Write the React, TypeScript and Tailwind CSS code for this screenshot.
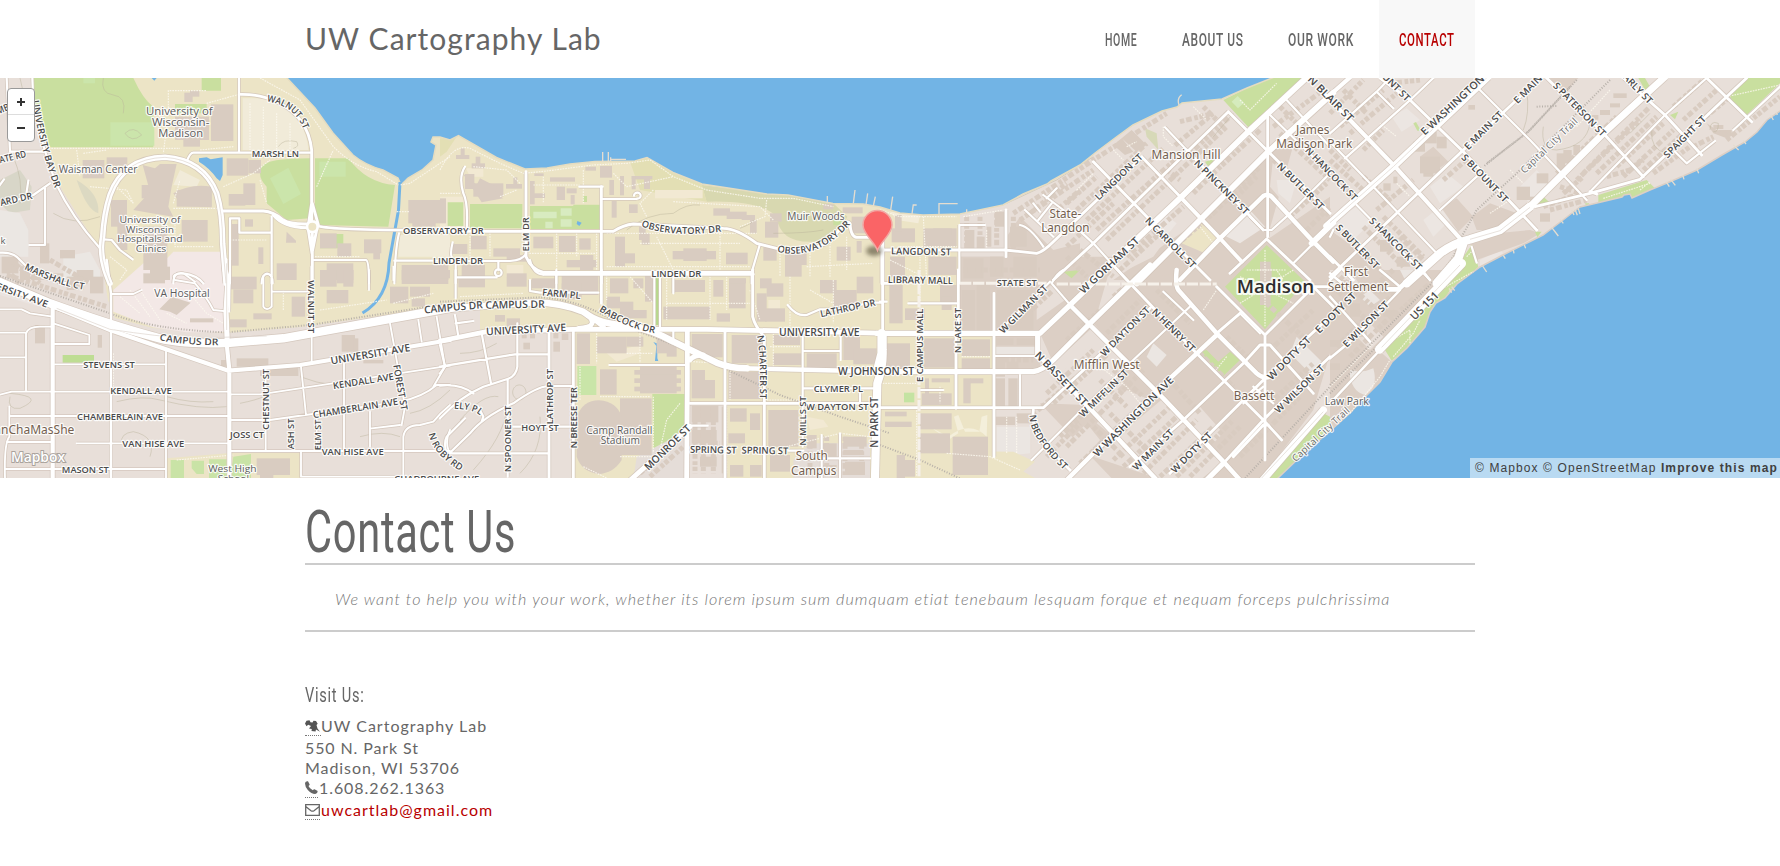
import React from "react";

type Sheet = "A" | "B" | "C" | "D" | "E" | "F" | "G" | "H";

// The map is split into sheets, each plotted at three units per pixel.
const ORIGIN: Record<Sheet, [number, number]> = {
  A: [0, 70], B: [0, 270], C: [440, 70], D: [440, 270],
  E: [880, 70], F: [880, 270], G: [1330, 70], H: [1330, 270],
};
const SHEETS = Object.keys(ORIGIN) as Sheet[];
const place = (s: Sheet) => `translate(${ORIGIN[s][0]} ${ORIGIN[s][1]}) scale(0.33333)`;

type Area = [string, string];
const AREAS: Record<Sheet, Area[]> = {
  A: [
    ["#f3e8e6", "M520,545 H665 V640 H430Z"],
    ["#d8d6c8", "M0,330 L60,300 L95,350 L90,420 L30,430 L0,400Z"],
    ["#dcd9c2", "M230,330 Q300,370 295,430 Q260,420 230,330Z"],
    ["#ebe7e3", "M0,420 L60,430 L85,480 V560 H0Z M190,560 L270,545 L300,600 V640 H190Z"],
    ["#f1ebd9", "M728,85 H830 Q920,150 925,240 H728Z M540,300 L600,330 L590,350 L520,345Z M1200,495 H1350 V560 H1195Z"],
    ["#c9df9f", "M100,24 H400 Q430,90 460,110 V232 H145 Q115,150 100,100Z M785,290 Q800,265 930,265 V445 L860,450 L800,400 V350 Q770,320 785,290Z M945,265 H1045 Q1100,340 1185,345 L1165,470 L960,465 L945,430Z M605,24 H663 V62 H605Z M525,102 H620 V130 H525Z M960,492 H1030 V535 H960Z"],
    ["#cbe5ab", "M331,157 H463 V227 H331Z M958,275 H1037 V320 H958Z M810,325 L865,293 L903,372 L850,402Z M250,24 H285 V40 H250Z"],
    ["#72b4e5", "M597,265 L620,262 L632,268 L668,262 V315 L660,333 L650,325 Q630,295 597,275Z M455,24 H470 L463,32Z"],
  ],
  B: [
    ["#f3e8e6", "M430,-20 L340,60 V125 L460,172 L560,187 H675 V-30 H520Z"],
    ["#ece4c6", "M500,565 L700,548 H903 V630 H500Z"],
    ["#c9e3a6", "M512,570 H552 V630 H512Z M575,572 H612 V612 H590 L575,595Z M627,568 H680 V630 H627Z M700,560 L753,552 V630 H690Z"],
    ["#bedd93", "M188,255 H282 V278 H188Z"],
    ["#ebe4e0", "M0,60 L150,110 L150,120 L0,75Z"],
  ],
  C: [
    ["#d8d8b0", "M785,345 L1045,375 L1180,400 L1222,440 Q1190,510 1120,515 Q1020,520 1010,440 Q960,390 800,395Z"],
    ["#e3dfb4", "M570,275 L620,262 L700,308 L785,342 L800,395 L600,360Z M0,205 L50,200 L20,245 L0,260Z"],
    ["#f2e9d3", "M645,360 H788 V385 H645Z M78,295 H130 V320 H90Z M0,380 H75 V480 H0Z M200,585 H250 V620 H200Z"],
    ["#c9df9f", "M23,397 H70 V468 H23Z M90,402 H247 V475 H90Z M270,408 H400 V404 H480 V477 H270Z M430,378 H441 V396 H430Z M1180,448 H1205 V466 H1180Z M645,620 H660 V640 H645Z"],
    ["#d8ebc0", "M280,425 H350 V445 H280Z M316,455 H338 V475 H316Z M362,415 H395 V437 H362Z M362,448 H395 V470 H362Z"],
    ["#72b4e5", "M412,453 L425,458 L418,468 L410,462Z"],
  ],
  D: [
    ["#f2e9d3", "M985,90 H1020 V120 H985Z M500,250 L600,225 V250 L530,275Z M1100,440 L1150,450 L1165,470 L1110,480Z"],
    ["#c9e5a8", "M412,288 H469 V375 H412Z"],
    ["#c9df9f", "M637,372 H735 V470 L640,555Z"],
    ["#b8d98c", "M645,22 H657 V165 H645Z"],
    ["#e5ddd8", "M1110,520 H1290 V630 H1060 V570Z M590,560 L735,485 V630 H580Z"],
    ["#72b4e5", "M640,216 L656,222 L652,228 V265 L655,273 H645 L649,228Z"],
  ],
  E: [
    ["#dccfc5", "M240,560 H380 V500 L420,440 L520,540 L600,520 V640 H240Z M700,630 L960,450 L1165,245 L1250,190 L1160,510 L1350,380 V640Z"],
    ["#e8dfd9", "M860,420 L900,450 L820,560 L740,600Z M1180,260 L1290,350 L1230,420 L1170,350Z M860,330 L905,385 L830,440 L790,400Z"],
    ["#ece6e2", "M850,430 L890,460 L850,510 L815,480Z M1110,420 L1155,470 L1080,520 L1030,495Z M1190,330 L1250,330 L1230,400 L1195,370Z"],
    ["#ece4c6", "M960,458 L1020,505 L975,550 L905,520Z"],
    ["#f3ecda", "M30,425 L120,435 L115,460 L50,450Z"],
    ["#c9df9f", "M1030,90 L1100,55 L1175,24 H1265 L1105,172Z M975,275 L1000,268 L1003,285 L985,290Z M555,605 L580,590 L600,605 L580,620Z"],
    ["#d7d9b8", "M795,175 L830,190 L835,240 L800,200Z"],
    ["#d5ebbd", "M1055,95 L1073,78 L1092,98 L1074,115Z"],
  ],
  F: [
    ["#dccfc5", "M240,-40 H700 L640,170 L520,280 L480,190 H240Z M342,195 H470 L480,260 V310 H342Z M760,40 L1000,-20 H1350 V250 L1300,420 L1140,630 H960 L1030,575 L850,385 L740,270 L640,160Z M620,405 L760,270 L850,385 L640,560 L830,624 L700,630 L480,400Z"],
    ["#e8dfd9", "M530,320 L620,235 L700,300 L740,330 L640,430 L560,345Z M650,460 L740,360 L810,390 L700,500Z M345,440 H455 V560 L420,580 L345,560Z M470,80 L520,40 L555,90 L470,150Z M900,470 L960,410 L1030,490 L970,550Z M620,405 L700,340 L740,400 L690,460Z M560,520 L620,460 L660,510 L600,580Z"],
    ["#ebe6e2", "M350,470 H450 V550 L350,560Z M345,230 H465 V255 H345Z M820,220 L860,255 L830,290 L800,260Z M1250,200 L1330,280 L1300,320 L1230,250Z"],
    ["#ece4c6", "M240,200 H335 V305 H240Z M-5,540 L400,545 L465,575 L400,630 H-5Z"],
    ["#f4efdb", "M150,470 L205,500 Q270,450 320,500 L322,435 L305,440 L298,485 L255,485 L235,435 L222,440 L235,490 L205,510Z"],
    ["#c9df9f", "M1160,-75 L1275,35 L1155,178 L1035,50Z M960,245 L980,240 L1015,275 L1050,245 L1080,270 L1030,318Z M1160,630 L1330,430 L1350,440 L1350,500 L1195,630Z M550,5 L600,0 L575,25Z"],
    ["#c4e3a2", "M72,368 H103 V397 H72Z"],
  ],
  G: [
    ["#ece6e2", "M185,140 L230,115 L270,150 L215,185Z M300,350 L350,310 L400,350 L330,400Z M560,360 L620,300 L660,340 L600,400Z M10,450 L80,410 L130,450 L70,510Z M280,450 L330,410 L360,450 L310,500Z M450,570 L510,540 L520,550 L450,590Z"],
    ["#dccfc5", "M0,480 L70,530 L140,590 L150,630 H0Z M660,24 H745 L700,75Z M425,440 L480,400 L560,430 L500,480 L440,480Z M335,415 L380,385 L430,440 L385,485Z M420,520 L500,490 L600,480 L630,490 L580,520 L440,570Z M270,260 L310,230 L355,275 L300,315Z"],
    ["#c9df9f", "M1190,80 L1250,24 H1350 V40 L1250,135Z M805,375 L950,330 L975,355 L905,385 L890,372 L878,382 L805,400Z M612,403 L640,380 L660,398Z M425,525 L445,590 L395,640 H345Z M925,24 H945 L960,50 L945,60Z M1020,135 L1045,125 L1035,148Z M250,160 L258,156 L273,182 H262Z M615,485 L635,485 L622,502Z M765,400 L778,400 L770,412Z"],
  ],
  H: [
    ["#dccfc5", "M0,0 H200 L390,0 L190,190 L145,240 L185,275 L150,335 L60,430 L0,480Z"],
    ["#e8dfd9", "M0,0 H60 L100,60 L0,60Z M110,150 L160,200 L120,240 L70,190Z"],
    ["#ebe6e2", "M60,300 Q100,310 130,295 Q145,350 110,375 Q70,370 60,320Z M90,80 L120,60 L150,90 L120,110Z M210,0 L260,0 L230,40Z"],
    ["#c9df9f", "M375,0 H440 L360,60 L345,85 L300,125 L285,170 L230,235 L185,272 L165,240 L250,150 L320,70Z"],
  ],
};

// Buildings as x, y, width, height.
const BUILDINGS: Record<Sheet, string> = {
  A: "553,68 25,28;570,62 28,18;633,103 67,110;525,140 102,70;550,210 50,20;248,270 65,55;320,262 62,25;680,265 65,52;745,270 38,40;686,372 50,35;730,340 36,65;333,390 48,80;352,465 30,75;545,450 78,65;430,470 72,130;450,590 60,40;1225,390 113,70;1237,458 70,12;960,490 50,45;1012,520 42,40;1092,508 52,42;830,580 60,50;980,580 80,50;1205,585 140,45;735,448 24,22;696,462 20,125;1120,548 20,20;775,532 15,50;120,520 28,60;180,540 45,25;5,560 50,50;60,590 30,40;230,600 50,30;425,345 75,40;530,360 105,50",
  B: "690,20 80,38;700,58 60,42;760,130 55,18;690,148 50,24;875,80 40,60;960,0 50,50;980,60 65,40;1010,0 50,40;1205,0 140,42;1170,50 55,50;1235,85 40,25;1030,0 30,50;710,265 95,25;780,290 115,28;1025,195 40,50;1060,205 15,50;105,165 30,55;430,10 65,30;570,145 70,12;293,195 13,38;100,0 40,30;60,-10 30,30;150,10 40,20;200,20 50,40;270,20 40,50;770,565 100,50;780,600 40,24;1230,50 60,30;663,270 30,20;1090,270 60,10",
  C: "62,235 12,30;48,255 40,12;107,260 14,30;95,280 40,15;75,312 28,45;100,340 90,40;220,322 12,32;198,342 48,14;283,310 28,8;270,333 14,70;270,370 45,14;330,322 75,13;350,350 25,40;380,355 30,15;392,375 12,28;436,290 32,12;480,288 36,35;508,330 14,45;540,318 12,58;575,318 62,10;575,318 12,40;612,322 18,35;515,393 15,50;567,403 26,26;0,385 18,70;93,498 47,40;37,522 45,30;280,500 60,35;357,498 50,48;418,505 34,34;160,535 80,25;200,555 60,20;380,570 90,22;420,555 40,45;525,500 30,90;555,550 30,30;597,470 20,40;605,490 24,34;698,543 130,25;730,535 70,38;858,548 65,35;820,415 50,22;860,425 60,22;905,435 40,15;930,450 20,40;990,430 35,25;975,455 40,48;970,532 40,40;1035,550 50,70;1070,545 30,40;1190,530 42,42;1235,440 55,50;1208,412 60,18;1150,402 30,16;1250,513 15,35;0,585 20,40;65,585 70,35;380,608 40,22",
  D: "0,0 30,25;55,20 80,32;200,10 60,40;275,25 70,30;365,5 110,70;365,40 60,48;510,25 55,45;580,25 30,30;615,15 25,80;500,80 40,35;540,95 40,40;550,120 70,25;670,110 140,38;700,30 95,36;820,30 30,50;867,25 50,90;870,25 48,15;960,25 35,30;980,40 50,40;950,70 30,85;975,115 60,40;830,130 40,25;1180,60 70,60;1140,30 50,40;1250,20 50,50;410,190 40,92;470,200 90,50;560,200 50,30;650,190 45,60;680,220 30,40;755,192 93,70;875,195 95,85;1000,195 80,30;1000,250 85,35;1100,250 90,50;1210,190 50,80;1240,235 70,48;480,298 50,76;600,290 110,80;583,300 140,14;583,325 140,14;583,350 140,14;755,300 40,85;795,330 30,55;865,305 95,82;540,385 95,170;870,415 50,40;930,430 30,50;865,490 50,30;870,585 40,35;930,585 35,35;985,420 90,110;990,555 60,50;755,407 80,50;755,480 75,40;780,560 50,30;845,410 5,200;340,185 15,20;340,215 20,30;365,190 20,20;245,190 15,15;270,190 15,15;250,218 20,20;200,145 40,25;165,135 30,20;1100,495 30,40;1150,520 40,40;1210,500 70,30;1210,540 60,15;1150,585 40,30;1215,575 60,40",
  E: "35,475 70,42;30,560 45,60;130,475 100,55;145,560 85,55;160,475 55,20;45,435 20,50;255,480 28,60;290,500 24,40;320,470 14,60;345,425 28,45;390,470 50,60;250,565 60,60;330,560 40,60;400,560 70,60;1145,595 30,35",
  F: "28,45 40,115;75,115 60,35;180,45 50,60;185,80 30,40;15,220 75,78;130,205 95,88;245,60 40,120;290,40 40,140;350,60 110,120;245,208 85,50;245,265 85,35;125,370 90,35;155,325 55,12;135,325 12,50;250,325 22,75;270,325 40,15;120,430 95,48;15,425 65,14;15,455 80,16;120,490 90,60;218,500 106,115;50,555 25,70;75,570 30,50;345,260 30,60;380,275 35,40;345,325 30,85;385,325 28,85;345,440 60,25;410,430 45,30;1140,-25 32,130;350,205 50,20;410,205 55,20",
  G: "250,215 35,30;285,185 35,35;320,200 30,35;280,300 30,20;270,260 60,50;415,105 20,14;810,120 30,15;780,135 25,14;850,70 40,14;840,100 30,12;680,250 25,50;700,240 25,40;730,225 20,30;560,350 40,40;600,380 30,20;620,310 35,30;630,430 30,25;160,340 22,22;190,320 12,20;1150,165 30,12;1165,180 40,15;150,510 40,35;200,560 40,30",
  H: "0,90 30,60;60,100 30,40;20,30 40,40;130,30 40,40;160,120 40,20;80,170 30,30;0,210 30,20;0,280 30,20",
};

// House rows: dashed strokes running beside the streets.
const HOUSES: Record<Sheet, string> = {
  A: "M30,570 L120,640 M20,600 L60,640 M150,570 L270,640",
  B: "M60,-5 L230,55 M20,15 L320,110",
  C: "",
  D: "M765,410 V610 M790,410 V610 M820,410 V610 M760,520 H840 M1110,500 V620 M1160,500 V620 M1215,500 V620 M1265,500 V620 M600,610 L720,505 M630,620 L730,530",
  E: "M400,430 L640,270 L860,130 M420,450 L640,300 M450,430 L560,340 M560,400 L650,320 M520,430 L600,360 M590,420 L800,220 M620,450 L850,235 M650,480 L890,265 M680,510 L1040,170 M560,530 L700,400 M900,155 L1000,130 L880,230 M930,250 L1050,140 M970,110 L1010,150 M740,560 L910,410 M860,300 L900,330 M940,370 L1000,310 L1140,180 M1000,430 L1140,290 M1180,170 L1330,60 M1200,110 L1250,160 M1200,190 L1350,330 M1180,270 L1350,440 M1230,190 L1350,300 M1050,400 L1130,320 M860,550 L1000,430 M720,600 L850,480 M650,620 L800,480 M260,440 V540 M300,440 V540 M350,430 V540 M400,440 V540 M250,600 H480 M600,540 L700,620 M560,560 L620,620 M1230,440 L1340,340 M1280,480 L1350,410",
  F: "M500,370 L640,240 M520,400 L680,255 M440,450 L590,320 M540,500 L740,310 M560,530 L790,300 M500,560 L600,460 M600,580 L830,360 M700,570 L870,410 M730,590 L890,440 M790,610 L950,450 M840,620 L1000,470 M890,620 L1060,450 M930,620 L1080,470 M660,330 L740,410 M700,300 L790,380 M640,470 L730,560 M690,430 L800,540 M870,330 L960,430 M800,90 L900,190 M830,60 L930,160 M960,250 L1060,350 M1040,200 L1110,270 M1170,240 L1300,120 M1170,400 L1300,280 M1080,560 L1260,380 M1160,100 L1290,220 M350,270 H460 M360,330 V410 M400,330 V410 M700,80 L780,10 M560,210 L660,120 M680,190 L780,90 M400,170 L520,60",
  G: "M0,130 L100,30 M30,170 L160,60 M60,190 L200,70 M0,240 L60,300 M0,270 L110,370 M20,330 L90,400 M100,240 L160,180 M100,320 L180,390 M140,420 L250,330 M40,60 L110,130 M180,40 L270,30 M100,470 L220,590 M60,500 L160,610 M160,440 L280,560 M210,500 L300,590 M340,330 L420,260 M680,310 L860,140 M740,330 L930,150 M700,370 L760,320 M760,310 L960,110 M800,310 L980,140 M860,290 L1000,160 M880,320 L1030,180 M660,420 L770,390 M640,410 L750,370 M690,350 L750,370 M900,300 L940,270 M940,300 L1060,190 M970,310 L1080,230 M1080,180 L1200,80 M960,60 L900,110 M1030,110 L1120,30 M1060,150 L1160,60 M1090,230 L1150,200 M1190,210 L1350,80 M830,320 L900,300",
  H: "M10,50 L120,160 M30,20 L140,120 M0,150 L60,90 M20,230 L110,140 M60,260 L200,120 M120,60 L190,0 M170,90 L210,60 M180,150 L300,40",
};

const ROADS: Record<Sheet, [number, string][]> = {
  A: [
    [7, "M20,24 L30,245 M97,24 L100,100 Q125,230 170,345 Q215,440 300,535 M30,245 H135 M0,405 L100,375 L150,340 M135,355 V525 H88 M80,365 L85,332 M0,345 L12,328 M717,24 V245 M560,275 Q570,248 580,248 H935 M690,640 V445 H718 V488 H815 M815,640 V440 M940,570 H1098 Q1107,572 1107,640 M1197,490 Q1185,540 1183,640 M1183,572 H1350 M310,508 L335,510 L360,540 L398,568 M520,640 Q520,605 550,610 Q590,615 610,640 M0,548 Q40,545 60,570 Q110,625 200,640 M785,640 Q785,612 802,612 Q818,612 818,640"],
    [9, "M722,73 Q780,72 830,95 Q925,140 935,240 V455 M937,485 V640 M670,423 H790 Q820,425 850,450 Q870,463 920,462 M820,435 Q850,472 920,473 M955,468 Q1000,482 1350,480 M935,400 L925,465 M937,400 L955,465 M925,480 L936,550 L950,480"],
    [17, "M330,640 Q295,560 308,500 Q312,430 330,375 Q370,265 495,262 Q610,270 650,370 Q668,430 668,520 L678,640"],
  ],
  B: [
    [6, "M498,245 V624 M0,188 H75 M0,118 H65 L90,130 L158,140 M78,360 V190 Q85,170 120,170 H160 M160,160 L268,195 V222 H160 M0,262 H78 M165,283 H498 M0,374 L35,365 H685 M690,373 H780 L1330,290 L1350,287 M30,438 H688 M695,450 H810 L1200,395 Q1270,380 1310,345 H1350 M230,520 H685 M690,543 H1350 M15,597 H498 M20,516 H158 M28,410 V500 Q12,520 15,624 M797,300 V540 M903,290 L918,435 M1032,280 V540 M1110,425 V530 M1170,160 L1215,410 L1205,465 M935,190 V275 M903,545 V620 H1200 M1210,624 V500 Q1215,465 1260,465 L1300,455 Q1320,430 1350,405 M1115,475 L1200,465 M1310,140 L1335,290 L1300,350 M1255,150 L1265,215 M688,125 L640,120 Q620,80 585,40 L525,30 Q510,10 550,10 L585,35 M333,72 H400 L425,60 M790,20 Q800,0 815,20 V110 Q800,125 790,110Z M818,65 H930 M1107,0 V60 M1180,-10 V30 M1350,480 Q1335,510 1345,540 M950,440 V540 M690,-30 L688,125"],
    [8, "M320,-30 L333,70 V624 M935,-10 V190"],
    [13, "M158,105 V624 M680,220 L688,300 V624 M685,302 L900,285 L1350,210 M150,105 L330,180 L685,302"],
    [16, "M675,-30 V0 L684,30 L678,125 L682,220"],
    [26, "M-10,32 L150,100 Q330,165 460,200 Q540,225 690,218 L850,205 L1360,112"],
  ],
  C: [
    [7, "M75,290 Q55,320 70,370 Q85,400 80,480 M418,350 H488 M485,387 H590 M0,573 H210 Q250,570 258,550 M960,522 L935,607 V640 M47,580 V640 M175,575 V600 M47,622 H170 M38,517 Q30,550 35,560 M349,607 V640 M582,377 A10,9 0 1 1 592,386 M165,608 A10,10 0 1 0 185,608 A10,10 0 1 0 165,608 M1330,540 H1360"],
    [9, "M258,305 V560 Q275,600 310,607 H935 M0,484 H520 Q550,465 580,462 L850,475 Q890,475 950,520 L1010,535 Q1100,550 1160,520 Q1180,505 1205,470 Q1220,448 1230,460 Q1232,500 1250,502 H1290 M484,350 V640 M1328,500 V640"],
  ],
  D: [
    [7, "M47,0 V85 M349,0 V60 M270,30 V63 L300,68 H475 M643,25 V170 M660,25 V170 M700,20 V70 M700,180 V210 M1088,190 V530 M1202,200 V270 M1088,243 H1202 M1145,495 V624 M1200,490 V624 M1090,355 H1310 M1260,360 V400 M508,285 H735 M0,290 L150,265 L225,253 H325 M125,190 L153,340 M232,160 V290 Q228,320 200,328 L130,350 Q60,380 0,445 M0,347 Q60,340 100,370 M203,330 V620 M30,548 L90,490 Q130,440 220,400 Q290,350 325,348 H400 M0,550 H327 M75,445 L20,500 Q10,520 20,550 M220,470 H400 M115,410 L130,440 L125,455 M45,135 L55,200 M47,160 L100,153 M0,225 L15,290 L0,310 M750,467 H803 M1045,542 H1090 M1145,565 H1290 M1043,105 Q1070,140 1100,135 L1140,118 H1200 L1290,98 H1328 M270,-30 Q280,13 310,13"],
    [9, "M484,0 V100 M310,13 H940 M938,0 V140 Q945,170 973,200 M973,200 V624 M855,185 V624 M750,400 H1310 M400,180 V624 M327,180 V624 M1328,0 V190 M1330,40 H1360"],
    [15, "M0,213 L140,185 L400,178 H800 L1350,190 M742,185 V330 L740,624 M560,640 L750,470 M415,175 Q490,170 430,125 M750,270 Q760,255 790,255 M440,130 L490,170"],
    [20, "M0,118 L240,100 Q340,90 430,125 Q480,165 560,165 Q640,180 700,215 L830,278 Q870,294 920,295"],
    [14, "M900,295 L1350,305"],
    [25, "M1328,195 V240 Q1330,290 1312,340 L1305,624"],
  ],
  E: [
    [7, "M855,172 L920,240 M435,420 L520,500 M420,465 Q450,470 490,530 M490,375 L550,420 M240,465 H315 M238,465 V640 M475,450 L515,400 M575,460 L640,520 L740,630 M500,385 L530,355 M460,400 L480,425 M1165,130 L1350,310 M1110,440 L1150,480 H1175 L1230,430 L1350,310 M1215,85 L1350,230 M1240,580 L1350,470"],
    [9, "M378,420 V560 M0,540 H375 L470,550 Q490,545 520,515 L785,262 M520,630 L640,520 L840,325 L1045,125 M640,275 L810,450 L990,630 M920,240 L1150,480 M1045,125 L1165,245 L1350,430 M1163,130 V500 M1050,610 L1160,507 L1290,630 M785,260 L905,385"],
    [12, "M905,385 L1020,505 L1085,575 M7,500 V640"],
    [14, "M900,630 L1020,505 L1150,378 Q1163,370 1175,380 L1300,515 L1360,575"],
    [18, "M630,640 L905,380 L1110,180 L1285,18 M770,640 L960,450 L1165,245 L1360,68 M1295,520 L1360,458"],
  ],
  F: [
    [7, "M345,258 H470 M515,40 Q530,10 550,0 M515,40 L575,110 M455,570 L620,405 L760,270 L935,105 M420,315 V415 M85,100 H230 M510,35 L350,190 M0,95 H20 M120,360 H190 M850,65 L940,150 M1080,130 L1140,190 M1120,350 L1180,400 M1090,400 L1150,350"],
    [9, "M0,413 H490 L680,235 L810,115 M755,45 L690,-25 M755,45 L940,240 L1150,450 L1205,510 M910,450 L1090,280 L1140,225 H1170 L1300,370 M750,590 L910,450 M870,610 L990,490 L1150,330 L1280,205 L1350,140 M1035,575 L1150,450 L1190,410 L1350,260 M1010,50 L1155,195 L1300,50 L1360,110 M1155,195 V570 M1300,50 H1350 M235,0 V190 M228,200 V415 M342,70 V560 M460,420 Q455,470 480,510 L570,600 M1010,190 L1080,130 M1060,560 L1150,465 H1165"],
    [14, "M475,255 L620,405 L830,630 M890,0 Q885,45 895,60 L1010,190 L1130,310 Q1150,328 1170,320 M570,105 L700,235 L850,385 L1030,575 L1080,630 M560,630 L650,540 L870,325 L1010,195"],
    [16, "M-10,190 H480 L570,105 L650,28 M-10,305 H460 Q490,300 520,270 L630,160 L810,-15 M473,190 V260 M980,630 L1030,580"],
    [22, "M1140,640 L1330,420"],
    [26, "M5,190 V250 L-8,300"],
  ],
  G: [
    [7, "M140,65 L190,115 M45,265 L235,95 L310,24 M0,190 L140,65 L180,24 M330,420 L440,320 M440,50 L600,210 L770,390 M1035,245 L1070,280 L1155,213 M1210,180 L1350,50 M425,530 L440,578 M0,215 L130,350 L320,550 M80,405 L300,630 M780,365 L1005,135 L1130,24 M0,500 L10,480"],
    [9, "M0,620 L200,430 L400,240 L630,24 M150,24 L240,90 L400,245 L620,480 M650,24 L820,190 L940,320 M880,24 L1005,135 L1115,255 M1130,24 L1265,155 M615,410 L780,370 L930,328 L1190,80 L1250,24 M0,560 L70,630 M780,365 L800,372"],
    [13, "M0,75 L60,22 M-30,60 L60,150 L200,295 L390,505"],
    [21, "M-10,468 L190,290 L475,20 M600,410 L820,190 L1005,20"],
    [26, "M230,640 L330,550 Q370,520 420,508 L510,480 L600,410 M320,640 L385,565 L400,520"],
  ],
  H: [
    [8, "M0,265 L60,215 L210,60 M0,80 L120,215 M210,50 L150,0 M0,30 L30,0 M300,30 L260,-20 M0,400 L150,240 M0,10 L60,60"],
    [15, "M175,58 H205 L300,-30"],
    [27, "M148,238 L395,-20"],
  ],
};

const PATHS: Record<Sheet, string> = {
  A: "M130,235 H540 M600,240 L700,230 M460,110 L500,170 L490,250 M505,130 V62 H620 M620,100 L717,73 M780,24 L900,90 L1000,230 Q1060,290 1130,305 L1195,345 M1350,260 L1290,300 L1230,340 L1200,345 M270,350 L380,360 L400,400 M520,400 L540,330 M520,415 H660 M670,350 L760,310 L810,270 M250,250 L320,240 M340,340 L400,400 M780,330 L800,400 M525,440 V530 H640 M690,510 H800 M945,560 H1080 M950,350 L1000,240 M1210,480 L1350,470 M1190,425 H1230 M750,100 V240 M790,110 V240 M830,130 V240 M870,160 V240 M330,560 L380,600 L360,630 M230,240 L240,320",
  B: "M360,80 L420,130 M390,60 L450,140 M420,60 L480,150 M560,60 L620,130 L670,160 M500,130 L560,160 M850,120 V60 M960,120 L1160,90 M1180,100 L1300,70 M530,570 L700,555 M340,250 V350",
  C: "M0,300 Q40,220 90,235 L180,280 L250,310 L320,303 L460,285 L560,280 L630,270 L700,320 L800,360 L960,385 L1060,385 L1180,410 M100,290 L200,300 L240,340 M310,320 V400 M280,345 H420 M430,300 V400 M520,310 L560,350 L700,320 M640,360 L600,400 L620,440 M700,395 L960,410 L1000,450 M980,390 L975,440 L900,470 M500,490 H950 M600,520 H900 M650,500 L700,600 M840,490 V600 M500,590 H930 M1020,540 V620 M1110,550 V620 M1170,520 V620 M1100,590 L1300,580 M90,490 V560 M150,490 V560 M350,490 V600 M410,490 V560 M470,490 V600 M260,550 H470 M1220,500 V600 M180,380 L230,360 M0,370 L60,370",
  D: "M60,80 L250,70 M500,15 V90 M570,20 L640,100 M680,20 V150 M810,20 V150 M860,20 V120 M680,100 H930 M930,60 L960,150 M1050,20 V180 M1180,30 V160 M1110,60 L1180,100 M470,190 V280 M560,250 H640 M600,190 V280 M760,275 L840,280 M480,380 H630 M640,380 V550 M720,400 L680,450 L660,540 M870,300 V390 M860,405 V610 M980,390 H1080 M1090,290 V380 M990,230 H1080 M420,390 V290 M1000,540 L1200,490 L1290,500 M430,590 L500,624 M540,560 L640,560 M1000,190 V290",
  E: "M0,420 L60,440 L230,440 M130,440 L140,630 M60,530 H230 M120,560 V630 M30,570 L110,610 M850,170 V200 L880,230 M700,240 L730,270 M740,230 L770,215 M1080,90 L1110,120 L1190,40 M940,110 L980,150 M960,470 L1000,520 M250,440 L370,420 M320,480 V540 M590,360 L640,310 M1130,600 L1190,600 L1210,630",
  F: "M1080,20 L1240,100 M1240,0 L1080,100 M1155,-60 V170 M1100,0 L1220,0 M120,40 V180 M10,40 H110 M0,340 H110 M245,260 H330 M180,350 V400 M200,550 L330,560 L420,600 M970,120 L1010,60 M660,290 L740,350 L780,400 M1040,260 L1000,310 M380,440 V550 M410,440 V550 M1170,230 L1230,290 M110,420 V620",
  G: "M1190,80 L1350,45 M820,385 L960,340 M930,360 L960,335 M200,340 L240,380 M480,430 L540,390 M840,60 L740,170 M150,160 L200,200 M540,300 L580,340 M410,560 L430,540",
  H: "M180,215 L240,180 V220 M190,260 L250,190 L270,150 M60,430 L150,320 L180,270 M330,60 L430,5 M0,350 L130,220",
};

const RAILS: [Sheet, string][] = [
  ["B", "M0,18 L330,130 Q460,180 680,187 L930,165 L1350,100"],
  ["D", "M0,95 L300,82 Q430,90 540,165 Q660,205 780,260 L1020,375 L1200,440 L1350,490"],
  ["F", "M0,525 L120,570 L250,630 M1090,630 L1350,350"],
  ["G", "M840,30 L560,310 L440,420 L395,500 L370,560 L320,630 M740,30 L600,180 L460,290 M720,50 L590,190 L470,280 M620,110 L680,108"],
  ["H", "M0,370 L370,0 M0,345 L350,-5"],
];

const CONTOURS: [Sheet, string][] = [
  ["A", "M310,24 Q300,70 340,75 Q380,80 370,130 M835,230 Q850,205 890,215 Q900,230 880,235 M375,190 Q400,165 425,195 Q395,220 375,190 M160,430 Q220,470 300,440 M60,24 Q80,90 60,150 M40,260 Q70,330 60,400"],
  ["B", "M30,370 Q140,380 60,415 Q20,420 30,380 M350,395 Q430,375 480,390 Q600,420 680,410 M365,520 Q360,490 400,485 Q470,500 450,560 M900,320 Q1000,360 1110,340 M1230,430 Q1290,420 1350,360 M1080,500 Q1150,480 1200,500 M720,400 Q770,390 790,380 M500,380 Q570,400 640,395"],
  ["C", "M560,480 Q620,430 700,430 Q740,400 780,405 M900,475 Q940,460 940,450 M1000,490 Q1100,490 1150,480"],
  ["D", "M225,350 A20,22 0 1 1 224,351 M60,250 Q120,250 170,220 M60,450 Q130,370 175,380 M100,600 Q190,500 200,420 M240,610 Q310,540 300,440"],
  ["G", "M640,170 Q630,240 680,240 Q770,230 780,160 M1140,180 Q1140,150 1165,160 Q1165,190 1150,185 M590,60 Q600,130 580,180 M965,180 Q960,240 1010,250 M900,190 L960,130"],
  ["E", "M380,400 L530,330 L640,260 M1000,200 L1060,130"],
];

const PIERS: [Sheet, string][] = [
  ["C", "M488,246 V275 M505,246 V275 M512,262 V273 M512,268 H558 M1162,378 V398 M1245,360 L1240,400 M1283,370 L1278,405 M1306,380 L1300,408"],
  ["E", "M38,380 L32,420 M100,403 L96,432 M98,405 H110 M177,432 V401 H233 M260,418 V432 M905,74 Q890,85 897,105"],
  ["G", "M665,472 L685,498 M690,448 L700,460 M725,420 L732,435 M735,418 L742,436 M745,416 L750,432 M1008,335 L1018,350 M1022,328 L1036,346 M1058,315 L1062,328 M1100,295 L1106,310 M1210,225 L1226,240 M1240,212 L1248,222 M458,588 L470,606 M520,556 L526,566 M583,525 L587,535 M550,540 L552,550 M1322,135 L1330,150 M1338,125 L1342,135"],
  ["H", "M357,55 L365,68 M365,50 L374,62"],
];

// Straight street labels: sheet, text, centre x, centre y, angle, length, size.
const LABELS: [Sheet, string, number, number, number, number, number?][] = [
  ["A", "MARSH LN", 826, 252, 0, 142], ["A", "ATE RD", 38, 260, -14, 82], ["A", "ARD DR", 48, 387, -13, 98], ["A", "MB", 8, 116, -22, 40],
  ["B", "STEVENS ST", 327, 283, 0, 155], ["B", "KENDALL AVE", 423, 362, 0, 184], ["B", "CHAMBERLAIN AVE", 360, 441, 0, 258],
  ["B", "VAN HISE AVE", 460, 520, 0, 186], ["B", "MASON ST", 256, 598, 0, 141], ["B", "JOSS CT", 741, 493, 0, 102],
  ["B", "CHESTNUT ST", 796, 388, -90, 182], ["B", "ASH ST", 873, 492, -90, 92], ["B", "ELM ST", 952, 495, -90, 92],
  ["B", "VAN HISE AVE", 1058, 546, 0, 186], ["B", "UNIVERSITY AVE", 1111, 253, -9.5, 242, 31], ["B", "KENDALL AVE", 1090, 333, -9, 184],
  ["B", "CHAMBERLAIN AVE", 1066, 414, -9, 258], ["B", "WALNUT ST", 935, 110, 90, 158], ["B", "FOREST ST", 1202, 352, 80, 138],
  ["B", "CHADBOURNE AVE", 1310, 625, 0, 255],
  ["C", "OBSERVATORY DR", 10, 482, 0, 242], ["C", "ELM DR", 258, 493, -90, 103], ["C", "LINDEN DR", 54, 572, 0, 150],
  ["C", "LINDEN DR", 709, 612, 0, 150],
  ["D", "CAMPUS DR", 40, 112, -5, 176, 31], ["D", "CAMPUS DR", 225, 104, -1, 178, 31], ["D", "FARM PL", 364, 71, 5, 115],
  ["D", "UNIVERSITY AVE", 258, 179, -3, 240, 31], ["D", "UNIVERSITY AVE", 1138, 187, 0, 242, 31], ["D", "LATHROP ST", 328, 380, -90, 166],
  ["D", "N SPOONER ST", 203, 507, -90, 200], ["D", "N BREESE TER", 400, 443, -90, 184], ["D", "HOYT ST", 300, 474, 0, 112],
  ["D", "LATHROP DR", 1223, 114, -12, 168], ["D", "CLYMER PL", 1195, 356, 0, 148], ["D", "W DAYTON ST", 1192, 409, 0, 188],
  ["D", "N MILLS ST", 1088, 453, -90, 148], ["D", "SPRING ST", 820, 539, 1, 140], ["D", "SPRING ST", 975, 541, 1, 140],
  ["D", "MONROE ST", 683, 533, -44, 180, 31], ["D", "N PARK ST", 1304, 457, -90, 152, 30], ["D", "W JOHNSON ST", 1308, 306, 0, 228, 31],
  ["E", "LANGDON ST", 123, 544, 1, 180], ["E", "LANGDON ST", 716, 320, -44, 186], ["E", "N CARROLL ST", 872, 518, 45, 202],
  ["E", "N PINCKNEY ST", 1025, 351, 45, 218], ["E", "N BUTLER ST", 1262, 348, 45, 186],
  ["F", "LIBRARY MALL", 121, 30, 1, 195], ["F", "STATE ST", 410, 38, 0, 120], ["F", "N LAKE ST", 232, 182, -90, 136],
  ["F", "E CAMPUS MALL", 118, 226, -90, 220], ["F", "W GILMAN ST", 430, 117, -45, 192], ["F", "W GORHAM ST", 688, -14, -43, 232, 31],
  ["F", "W DAYTON ST", 735, 184, -45, 196], ["F", "N HENRY ST", 881, 180, 45, 170], ["F", "N BASSETT ST", 544, 326, 46, 212, 31],
  ["F", "W MIFFLIN ST", 671, 369, -44, 192], ["F", "W WASHINGTON AVE", 760, 440, -45, 326, 31], ["F", "W MAIN ST", 819, 539, -45, 160],
  ["F", "W DOTY ST", 934, 547, -45, 160], ["F", "W DOTY ST", 1227, 265, -45, 170, 31], ["F", "W WILSON ST", 1258, 356, -44, 194],
  ["F", "E DOTY ST", 1367, 128, -45, 160, 30],
  ["G", "N BLAIR ST", 2, 86, 45, 180, 31], ["G", "BLOUNT ST", 178, 30, 45, 165], ["G", "E WASHINGTON", 368, 105, -43, 248, 31],
  ["G", "E MAIN ST", 460, 181, -45, 150], ["G", "E MAIN ST", 608, 42, -45, 150], ["G", "S PATERSON ST", 749, 118, 46, 212],
  ["G", "BREARLY ST", 905, 36, 46, 168], ["G", "SPAIGHT ST", 1064, 200, -45, 166], ["G", "S BLOUNT ST", 465, 324, 46, 188],
  ["G", "N HANCOCK ST", 4, 311, 46, 210], ["G", "S HANCOCK ST", 197, 521, 45, 210], ["G", "S BUTLER ST", 83, 529, 46, 172],
  ["H", "US 151", 284, 108, -45, 105, 33], ["H", "E WILSON ST", 107, 162, -45, 182],
];

// Labels that bend with their street.
const CURVED: [Sheet, string, string, number][] = [
  ["A", "WALNUT ST", "M800,94 Q890,108 914,188", 146], ["A", "UNIVERSITY BAY DR", "M97,92 Q118,230 166,358", 272],
  ["A", "MARSHALL CT", "M72,597 Q170,645 248,659", 190],
  ["B", "UNIVERSITY AVE", "M-85,30 L148,116", 240], ["B", "CAMPUS DR", "M478,211 Q560,226 660,226", 178],
  ["B", "N ROBY RD", "M1286,492 Q1300,555 1385,605", 150],
  ["C", "OBSERVATORY DR", "M603,469 Q700,505 850,484", 244], ["C", "OBSERVATORY DR", "M1011,545 Q1130,575 1232,462", 248],
  ["D", "BABCOCK DR", "M476,122 Q560,175 645,190", 182], ["D", "N CHARTER ST", "M950,198 Q962,230 960,388", 190],
  ["D", "ELY PL", "M42,416 Q100,418 118,435", 82], ["F", "N BEDFORD ST", "M449,435 Q445,500 560,608", 200],
];

const PLACES: [Sheet, string, number, number, number, number][] = [
  ["A", "University of", 538, 135, 200, 32], ["A", "Wisconsin-", 542, 168, 172, 32], ["A", "Madison", 542, 201, 134, 32],
  ["A", "Waisman Center", 294, 310, 236, 30], ["A", "University of", 450, 459, 183, 29.5], ["A", "Wisconsin", 450, 488, 144, 29.5],
  ["A", "Hospitals and", 450, 517, 196, 29.5], ["A", "Clinics", 453, 546, 92, 29.5], ["A", "k", 9, 523, 15, 29.5],
  ["B", "VA Hospital", 546, 82, 166, 30], ["B", "West High", 697, 606, 145, 29.5], ["B", "School", 700, 635, 94, 29.5],
  ["C", "Muir Woods", 1128, 449, 172, 30], ["D", "Camp Randall", 538, 493, 198, 30], ["D", "Stadium", 541, 521, 118, 30],
  ["H", "Law Park", 50, 406, 132, 30],
];

const HOODS: [Sheet, string, number, number, number][] = [
  ["B", "anChaMasShe", 103, 491, 240], ["D", "South", 1115, 571, 96], ["D", "Campus", 1121, 616, 136],
  ["E", "State-", 556, 443, 95], ["E", "Langdon", 556, 486, 145], ["E", "Mansion Hill", 918, 268, 207],
  ["E", "James", 1298, 191, 100], ["E", "Madison Park", 1303, 235, 228], ["F", "Mifflin West", 680, 296, 198],
  ["F", "Bassett", 1122, 391, 121], ["G", "First", 78, 619, 72], ["H", "Settlement", 84, 62, 182],
];

const NORTH_SHORE =
  "M279,68 L287,78 L315,108 333,133 353,155 Q365,165 383,170 L398,178 401,185 408,178 422,170 433,160 436,145 431,142 433,137 440,137 450,140 458.5,135.5 496.5,157.5 525,169 547,168 570,164 595,161.5 635,161 647,157.5 673,172.5 702,184 767,194 788,195 833,203.5 863,204 880,207 900,213 923,215 960,214 1003,205 1023,194 1047,184 1051,181 1080,165 1095,153 1115,138 1133,125 1162,111 1177,107 1182,103 1222,99 1247,88 1272,78 1296,68Z";
const SOUTH_SHORE =
  "M1790,102 L1780,111 L1767,120 1757,132 1745,142 1722,155 1697,170 1667,183 1650,190 1632,198 1630,194 1624,195 1622,197 1597,203 1580,207 1572,213 1563,220 1543,235 1527,243 1503,255 1480,267 1457,284 1445,298 1436,303 1430,312 1425,327 1407,348 1392,362 1380,382 1365,397 1350,413 1330,431 1300,457 1278,478 1268,488 H1790Z";
const CAMPUS =
  "M34,78 L48,148 62,190 100,250 108,300 115,318 153,328 226,333 300,327 480,302 480,332 573,328 573,478 630,478 685,425 687,403 727,403 727,478 H1035 L993,455 V335 L960,332 V78Z";

function Sheets({ children }: { children: (s: Sheet) => React.ReactNode }) {
  return <>{SHEETS.map((s) => <g key={s} transform={place(s)}>{children(s)}</g>)}</>;
}

function CityMap() {
  return (
    <svg className="block h-[400px] w-full tracking-normal" viewBox="0 78 1780 400" preserveAspectRatio="none">
      <rect x="0" y="78" width="1780" height="400" fill="#e8dfd9" />
      <path d={CAMPUS} fill="#ece4c6" />
      <Sheets>{(s) => AREAS[s].map(([fill, d], i) => <path key={i} fill={fill} d={d} />)}</Sheets>
      <Sheets>
        {(s) => (
          <>
            <g fill="#d9ccc1">
              {BUILDINGS[s].split(";").map((b, i) => {
                const [x, y, w, h] = b.split(/[ ,]/).map(Number);
                return <rect key={i} x={x} y={y} width={w} height={h} />;
              })}
            </g>
            <path d={HOUSES[s]} fill="none" stroke="#d9ccc1" strokeWidth="15" strokeDasharray="13 6 17 8 11 5" />
          </>
        )}
      </Sheets>
      <g fill="#d9ccc1">
        <g transform={place("A")}>
          <path d="M428,285 L465,295 L480,282 H530 L515,350 L505,410 L520,440 L455,430 L400,420 L450,365Z M520,370 Q570,340 635,350 V412 L545,408Z M860,485 L888,512 V518 H858Z" />
        </g>
        <g transform={place("B")}><path d="M478,118 L515,80 L572,98 L530,135 L510,125Z" /></g>
        <g transform={place("C")}><path d="M68,310 L110,345 L120,325 L170,350 L165,370 L190,385 L125,397Z" /></g>
        <g transform={place("D")}><path d="M410,440 Q430,390 478,391 Q530,395 545,440 V570 Q520,610 475,612 Q425,605 410,560Z" /></g>
        <g transform={place("E")}><path d="M725,205 L755,180 L800,225 L770,245Z M700,225 L725,205 L760,245 L735,255Z" /></g>
        <g transform={place("G")}><path d="M1130,160 L1160,180 L1210,195 L1190,205 L1150,190Z" /></g>
      </g>
      {CONTOURS.map(([s, d], i) => (
        <path key={i} transform={place(s)} d={d} fill="none" stroke="#b9b39b" strokeOpacity="0.45" strokeWidth="3" />
      ))}
      <g stroke="#e5dcc0" strokeWidth="1.500">
        <path d={NORTH_SHORE} fill="#72b4e5" />
        <path d={SOUTH_SHORE} fill="#72b4e5" stroke="#dccfc5" />
      </g>
      {PIERS.map(([s, d], i) => (
        <path key={i} transform={place(s)} d={d} fill="none" stroke="#e5ddd0" strokeWidth="4" />
      ))}
      <path d="M400,182 L398.5,210 389,263 Q388,298 362.500,313" fill="none" stroke="#72b4e5" strokeWidth="3" />
      <Sheets>
        {(s) => (
          <path d={PATHS[s]} fill="none" stroke="#fbf8ef" strokeOpacity="0.85" strokeWidth="3.5" strokeDasharray="5 3" />
        )}
      </Sheets>
      {RAILS.map(([s, d], i) => (
        <path key={i} transform={place(s)} d={d} fill="none" stroke="#b7b0a9" strokeWidth="6" strokeDasharray="3 5" />
      ))}
      <Sheets>
        {(s) => ROADS[s].map(([w, d], i) => (
          <path key={i} d={d} fill="none" stroke="#cfc2b7" strokeOpacity="0.8" strokeWidth={w + 4} strokeLinejoin="round" />
        ))}
      </Sheets>
      <Sheets>
        {(s) => ROADS[s].map(([w, d], i) => (
          <path key={i} d={d} fill="none" stroke="#ffffff" strokeWidth={w - 0.5} strokeLinejoin="round" strokeLinecap="round" />
        ))}
      </Sheets>
      <g fill="none" stroke="#ddd3cb" strokeWidth="2">
        <path transform={place("A")} d={ROADS.A[2][1]} />
        <path transform={place("B")} d="M170,115 L330,178 Q480,200 560,205 L800,198 M680,-20 V180" />
        <path transform={place("G")} d="M0,458 L190,290 L470,24 M420,508 L510,482 L600,412" />
        <path transform={place("H")} d="M155,232 L390,-15" />
        <path transform={place("F")} d="M1145,624 L1330,425" />
      </g>
      <path transform={place("F")} d="M240,40 H500 M530,42 H1010 M117,0 V624" fill="none" stroke="#f6f1ea" strokeWidth="9" strokeDasharray="34 5" />
      <circle transform={place("A")} cx="937" cy="470" r="16" fill="#ece4c6" stroke="#ffffff" strokeWidth="8" />

      <g
        fontFamily="'Open Sans', 'Noto Sans', sans-serif"
        textAnchor="middle"
        stroke="#ffffff"
        strokeOpacity="0.85"
        strokeWidth="7"
        strokeLinejoin="round"
        paintOrder="stroke"
      >
        <g fontWeight="600" fill="#4a4a4a">
          {LABELS.map(([s, t, x, y, a, len, size], i) => (
            <g key={i} transform={place(s)}>
              <text transform={`translate(${x} ${y}) rotate(${a})`} y="10.500" fontSize={size ?? 28.5} textLength={len} lengthAdjust="spacingAndGlyphs">{t}</text>
            </g>
          ))}
          {CURVED.map(([s, t, d, len], i) => (
            <g key={i} transform={place(s)}>
              <path id={`street-${i}`} d={d} fill="none" stroke="none" />
              <text fontSize={28} textAnchor="start">
                <textPath href={`#street-${i}`} textLength={len} lengthAdjust="spacingAndGlyphs">{t}</textPath>
              </text>
            </g>
          ))}
        </g>
        <g fontWeight="500" fill="#5c5c5c">
          {PLACES.map(([s, t, x, y, len, size], i) => (
            <g key={i} transform={place(s)}><text x={x} y={y} fontSize={size} textLength={len} lengthAdjust="spacingAndGlyphs">{t}</text></g>
          ))}
        </g>
        <g fontFamily="'Noto Sans', 'Open Sans', sans-serif" fill="#74604f">
          {HOODS.map(([s, t, x, y, len], i) => (
            <g key={i} transform={place(s)}><text x={x} y={y} fontSize="35.500" textLength={len} lengthAdjust="spacingAndGlyphs">{t}</text></g>
          ))}
        </g>
        <g fill="#6b6b6b" fontWeight="500">
          <g transform={place("G")}><text transform="translate(657 227) rotate(-44)" y="10" fontSize="29" textLength="224">Capital City Trail</text></g>
          <g transform={place("F")}><text transform="translate(1322 493) rotate(-43)" y="10" fontSize="29" textLength="224">Capital City Trail</text></g>
        </g>
        <text x="1275.500" y="293" fontSize="18.500" fontWeight="600" fill="#2e2e2e" strokeWidth="4" textLength="77.500" lengthAdjust="spacingAndGlyphs">Madison</text>
      </g>

      <text
        x="11" y="462" fontSize="14.500" fontFamily="'Open Sans', sans-serif" fontWeight="600" fill="#ffffff"
        stroke="#8e8882" strokeOpacity="0.7" strokeWidth="2" paintOrder="stroke" textLength="54" lengthAdjust="spacingAndGlyphs"
      >
        Mapbox
      </text>

      <defs>
        <filter id="soft" x="-50%" y="-50%" width="200%" height="200%"><feGaussianBlur stdDeviation="2.200" /></filter>
      </defs>
      <ellipse cx="874" cy="251" rx="8" ry="5" fill="#4d4630" opacity="0.6" filter="url(#soft)" />
      <path
        d="M877.500,250.500 C874,241 863,234 863,225 A14.500,14.500 0 0 1 892,225 C892,234 881,241 877.500,250.500Z"
        fill="#fa6466" stroke="#f2a7a4" strokeWidth="1.500"
      />
    </svg>
  );
}

const NAV = [
  { label: "HOME", box: "mr-[45px] w-[32px]", scale: "scale-x-[0.570]" },
  { label: "ABOUT US", box: "mr-[45px] w-[61px]", scale: "scale-x-[0.645]" },
  { label: "OUR WORK", box: "mr-[25px] w-[66px]", scale: "scale-x-[0.650]" },
];

const NARROW = "inline-block origin-left whitespace-nowrap";

export default function App() {
  return (
    <div className="h-[866px] w-full overflow-hidden bg-white font-['Lato',sans-serif] tracking-[1px] text-[#666]">
      <header className="mx-auto flex h-[78px] w-[1170px] justify-between">
        <a className="pt-[20px] text-[30px] leading-[36px] tracking-[1.05px]">UW Cartography Lab</a>
        <nav className="flex h-full font-['Roboto',sans-serif] text-[18.5px] font-medium leading-[80px]">
          {NAV.map((n) => (
            <a key={n.label} className={n.box}>
              <span className={`${NARROW} ${n.scale}`}>{n.label}</span>
            </a>
          ))}
          <a className="h-[78px] w-[96px] bg-[#f8f8f8] pl-5 text-[#b80000]">
            <span className={`${NARROW} scale-x-[0.615]`}>CONTACT</span>
          </a>
        </nav>
      </header>

      <section className="relative h-[400px] w-full overflow-hidden">
        <CityMap />
        <div className="absolute left-[7px] top-[10px] w-[28px] rounded border border-[#999] bg-white text-[#333]">
          <button className="flex h-[26px] w-full items-center justify-center border-b border-[#ddd]">
            <svg className="size-[10px]" viewBox="0 0 10 10"><path d="M1,5 H9 M5,1 V9" stroke="#333" strokeWidth="2" /></svg>
          </button>
          <button className="flex h-[26px] w-full items-center justify-center">
            <svg className="size-[10px]" viewBox="0 0 10 10"><path d="M1,5 H9" stroke="#333" strokeWidth="2" /></svg>
          </button>
        </div>
        <div className="absolute bottom-0 right-0 h-5 w-[310px] whitespace-nowrap bg-white/50 pl-[5px] font-['Liberation_Sans',sans-serif] text-[12px] leading-5 tracking-[1.1px] text-[#404040]">
          © Mapbox © OpenStreetMap <b>Improve this map</b>
        </div>
      </section>

      <main className="mx-auto w-[1170px]">
        <h1 className="h-[87px] border-b-2 border-[#ccc] pt-[19px] font-['Roboto',sans-serif] text-[59px] font-normal leading-[70px]">
          <span className={`${NARROW} scale-x-[0.705]`}>Contact Us</span>
        </h1>
        <p className="h-[67px] whitespace-nowrap border-b-2 border-[#ccc] pl-[30px] pt-[21px] text-[16.2px] font-light italic leading-[26px] text-[#777]">
          We want to help you with your work, whether its lorem ipsum sum dumquam etiat tenebaum lesquam forque et nequam forceps pulchrissima
        </p>
        <h2 className="mt-[50px] h-[32px] font-['Roboto',sans-serif] text-[20px] leading-[26px]">
          <span className={`${NARROW} scale-x-[0.730]`}>Visit Us:</span>
        </h2>
        <address className="text-[16px] not-italic leading-5">
          <div className="flex h-[22px] items-start pt-[2px]">
            <span className="flex h-[20px] w-[16px] items-center border-b border-dotted border-[#777]">
              <svg className="h-[12px] w-[15px]" viewBox="0 0 15 12">
                <path fill="#555" d="M0,3.500 L1.500,.8 L4.500,.2 L5.500,2.200 L7.500,2.500 L8.500,.8 L11,1 L12.700,3.800 L11.500,5 L12.500,8.500 L15,11.800 L11,9.500 L10.500,11.500 L6.500,11 L6.800,9 L4,8.500 L6,6 L3.200,4.800 L1.500,6.200Z" />
              </svg>
            </span>
            <span>UW Cartography Lab</span>
          </div>
          <div className="mt-[2px] h-5 tracking-[0.88px]">550 N. Park St</div>
          <div className="h-5 tracking-[0.92px]">Madison, WI 53706</div>
          <div className="flex h-[20px]">
            <span className="flex h-[20px] w-[13px] items-center border-b border-dotted border-[#777]">
              <svg className="h-[13px] w-[13px]" viewBox="0 0 13 13">
                <path fill="#666" d="M0,2.500 Q0,.8 2,.3 L3,.3 L4.700,3.500 Q4.600,4.300 3.500,5 Q4.500,7.500 7.800,9.300 Q8.800,8 9.500,8.200 L12.700,9.900 Q12.700,12.600 10.200,12.900 Q6.500,13 2.800,9 Q0,5.500 0,2.500Z" />
              </svg>
            </span>
            <span className="pl-[1px] tracking-[0.92px]">1.608.262.1363</span>
          </div>
          <div className="flex h-[22px] pt-[2px]">
            <span className="flex h-[20px] w-[15px] items-center border-b border-dotted border-[#777]">
              <svg className="h-[12px] w-[15px]" viewBox="0 0 15 12">
                <path fill="none" stroke="#666" strokeWidth="1.300" d="M.7,.7 H14.300 V11.300 H.7Z M.7,2.500 L6,6.700 Q7.500,7.700 9,6.700 L14.300,2.500" />
              </svg>
            </span>
            <a className="pl-[1px] text-[#b80000]">uwcartlab@gmail.com</a>
          </div>
        </address>
      </main>
    </div>
  );
}
